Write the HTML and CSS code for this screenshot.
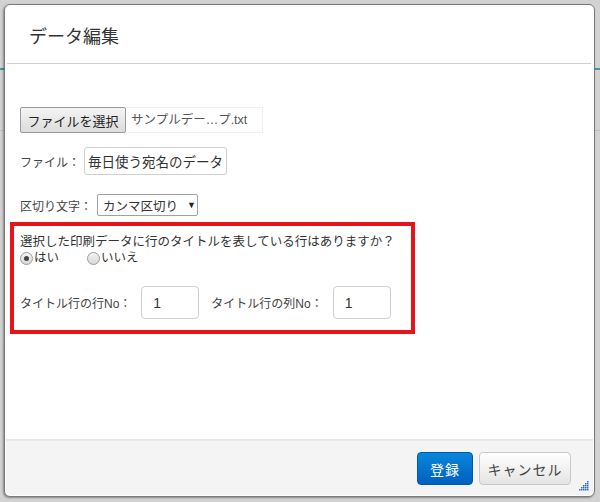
FILE: index.html
```html
<!DOCTYPE html>
<html lang="ja">

<head>
    <meta charset="UTF-8">
    <meta name="viewport" content="width=device-width, initial-scale=1.0">
    <title>データ編集</title>
    <link rel="stylesheet" href="styles.css">
</head>

<body>
    <div class="modal">
        <div class="modal_header">
            <h3>データ編集</h3>
        </div>
        <div class="modal_body">
            <div class="row file_row">
                <button class="file_btn">ファイルを選択</button>
                <span class="file_name">サンプルデー…プ.txt</span>
            </div>
            <div class="row name_row">
                <label class="lbl">ファイル：</label>
                <input class="txt name_input" type="text" value="毎日使う宛名のデータ">
            </div>
            <div class="row sep_row">
                <label class="lbl">区切り文字：</label>
                <div class="select">カンマ区切り<span class="arrow">▼</span></div>
            </div>
            <div class="title_box">
                <p class="question">選択した印刷データに行のタイトルを表している行はありますか？</p>
                <div class="radios">
                    <label class="radio"><span class="dot checked"></span>はい</label>
                    <label class="radio"><span class="dot"></span>いいえ</label>
                </div>
                <div class="title_row">
                    <label class="lbl">タイトル行の行No：</label>
                    <input class="txt num" type="text" value="1">
                    <label class="lbl">タイトル行の列No：</label>
                    <input class="txt num" type="text" value="1">
                </div>
            </div>
        </div>
        <div class="modal_footer">
            <button class="btn primary">登録</button>
            <button class="btn">キャンセル</button>
        </div>
        <svg class="grip" width="10" height="10" viewBox="0 0 10 10">
            <g fill="#2a6fd0">
                <rect x="8" y="0" width="1.5" height="1.5"/>
                <rect x="6" y="2" width="1.5" height="1.5"/>
                <rect x="8" y="2" width="1.5" height="1.5"/>
                <rect x="4" y="4" width="1.5" height="1.5"/>
                <rect x="6" y="4" width="1.5" height="1.5"/>
                <rect x="8" y="4" width="1.5" height="1.5"/>
                <rect x="2" y="6" width="1.5" height="1.5"/>
                <rect x="4" y="6" width="1.5" height="1.5"/>
                <rect x="6" y="6" width="1.5" height="1.5"/>
                <rect x="8" y="6" width="1.5" height="1.5"/>
                <rect x="0" y="8" width="1.5" height="1.5"/>
                <rect x="2" y="8" width="1.5" height="1.5"/>
                <rect x="4" y="8" width="1.5" height="1.5"/>
                <rect x="6" y="8" width="1.5" height="1.5"/>
                <rect x="8" y="8" width="1.5" height="1.5"/>
            </g>
        </svg>
    </div>
</body>

</html>
```

FILE: styles.css
```css
* {
    box-sizing: border-box;
}

body {
    margin: 0;
    padding: 4px 5px 5px 4px;
    font-family: "Liberation Sans", "Noto Sans CJK JP", sans-serif;
    color: #333;
    background-color: #d2d2d2;
    background-image: linear-gradient(to bottom, transparent 68px, #3a9aa6 68px, #3a9aa6 70px, transparent 70px,
        transparent 130px, #bdbdbd 130px, #bdbdbd 131px, transparent 131px);
}

.modal {
    position: relative;
    width: 591px;
    height: 493px;
    background-color: white;
    border: 1px solid #7a7a7a;
    border-radius: 6px;
    box-shadow: -1px 1px 2px rgba(0, 0, 0, 0.35);
    display: flex;
    flex-direction: column;
}

.modal_header {
    height: 59px;
    margin: 0 3px 0 2px;
    border-bottom: 1px solid #d0d0d0;
    display: flex;
    align-items: center;
    padding-left: 22px;
    padding-top: 2px;
}

.modal_header h3 {
    margin: 0;
    font-size: 18px;
    font-weight: normal;
    color: #333;
}

.modal_body {
    flex: 1;
    padding: 43px 0 0 5px;
}

.row {
    display: flex;
    align-items: center;
    margin-left: 10px;
}

.file_row {
    height: 26px;
}

.name_row {
    margin-top: 14px;
}

.sep_row {
    margin-top: 19px;
}

.file_btn {
    height: 26px;
    width: 106px;
    padding: 0;
    font-family: inherit;
    font-size: 13px;
    color: #222;
    background: linear-gradient(#f4f4f4, #dcdcdc);
    border: 1px solid #9a9a9a;
    border-radius: 2px;
}

.file_name {
    height: 26px;
    width: 137px;
    line-height: 24px;
    padding-left: 5px;
    font-size: 12.5px;
    color: #555;
    border: 1px solid #f0f0f0;
    border-left: none;
}

.lbl {
    font-size: 12px;
    color: #444;
}

.txt {
    font-family: inherit;
    color: #333;
    border: 1px solid #cfcfcf;
    border-radius: 3px;
    background-color: white;
    outline: none;
}

.name_input {
    margin-left: 4px;
    width: 143px;
    height: 28px;
    padding: 0 3px;
    font-size: 13.5px;
}

.select {
    margin-left: 5px;
    width: 101px;
    height: 22px;
    padding-left: 5px;
    display: flex;
    align-items: center;
    font-size: 12.5px;
    color: #333;
    border: 1px solid #a0a0a0;
    border-radius: 2px;
}

.arrow {
    font-size: 9px;
    margin-left: 9px;
    color: #222;
}

.title_box {
    margin-top: 6px;
    width: 405px;
    height: 112px;
    border: 4px solid #e8141c;
    padding: 8px 0 0 6px;
}

.question {
    margin: 0;
    font-size: 12.5px;
    color: #333;
    line-height: 16px;
}

.radios {
    display: flex;
    gap: 28px;
    font-size: 12.5px;
    line-height: 16px;
}

.radio {
    display: flex;
    align-items: center;
    color: #333;
}

.dot {
    width: 13px;
    height: 13px;
    border-radius: 50%;
    border: 1px solid #9a9a9a;
    background: linear-gradient(#f4f4f4, #d8d8d8);
    margin-right: 1px;
    display: flex;
    align-items: center;
    justify-content: center;
}

.dot.checked::after {
    content: "";
    width: 5px;
    height: 5px;
    border-radius: 50%;
    background-color: #444;
}

.title_row {
    display: flex;
    align-items: center;
    margin-top: 20px;
}

.num {
    width: 58px;
    height: 33px;
    padding-left: 11px;
    font-size: 14px;
    border-radius: 4px;
    margin-left: 10px;
    margin-right: 12px;
}

.modal_footer {
    height: 56px;
    margin: 0 1px 1px 1px;
    border-top: 2px solid #e8e8e8;
    background-color: #f4f4f4;
    border-radius: 0 0 5px 5px;
    display: flex;
    justify-content: flex-end;
    align-items: center;
    gap: 6px;
    padding-right: 22px;
    padding-top: 1px;
}

.btn {
    height: 33px;
    width: 92px;
    font-family: inherit;
    font-size: 14px;
    color: #444;
    background: linear-gradient(#ffffff, #e4e4e4);
    border: 1px solid #c8c8c8;
    border-radius: 4px;
    letter-spacing: 1px;
}

.btn.primary {
    width: 56px;
    color: white;
    background: linear-gradient(#0a86dc, #0060bf);
    border: 1px solid #0058ad;
}

.grip {
    position: absolute;
    right: 5px;
    bottom: 5px;
}
```
